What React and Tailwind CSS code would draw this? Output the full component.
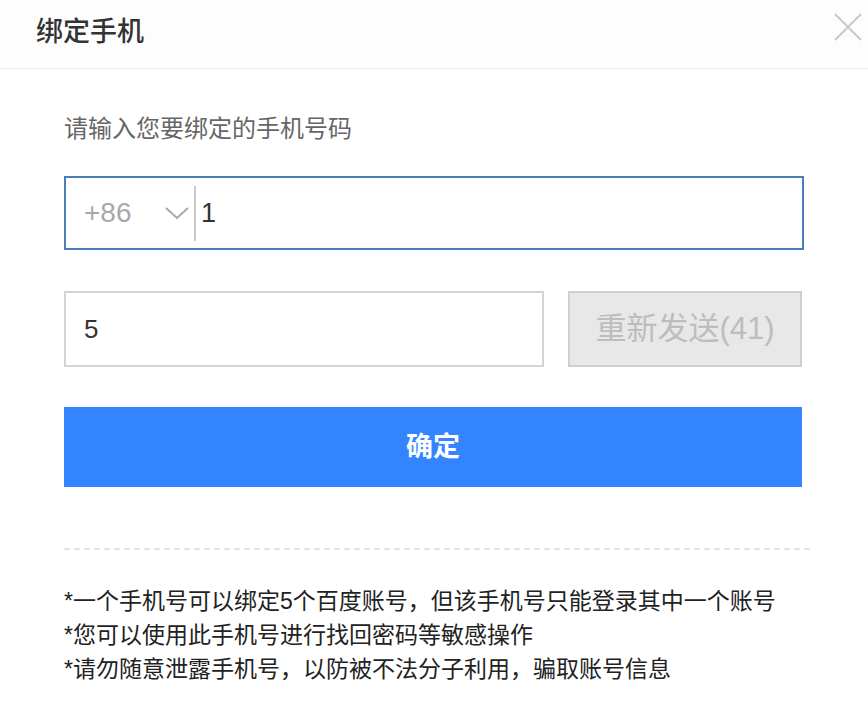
export default function App() {
  const font = { fontFamily: '"Liberation Sans", "Noto Sans CJK SC", sans-serif' };
  const notes = [
    "*一个手机号可以绑定5个百度账号，但该手机号只能登录其中一个账号",
    "*您可以使用此手机号进行找回密码等敏感操作",
    "*请勿随意泄露手机号，以防被不法分子利用，骗取账号信息",
  ];

  return (
    <div className="w-[868px] h-[720px] bg-white overflow-hidden" style={font}>
      {/* Header */}
      <div className="h-[69px] border-b border-[#ececec] bg-[#fdfdfd] flex items-center justify-between pl-[36px] pr-[6px]">
        <h2 className="text-[27px] text-[#333] font-medium leading-none -mt-[3px]">绑定手机</h2>
        <button className="w-[28px] h-[28px] -mt-[14px] text-[#c8c8c8]">
          <svg viewBox="0 0 28 28" width="28" height="28" fill="none" stroke="currentColor" strokeWidth="2">
            <path d="M1 1 L27 27 M27 1 L1 27" />
          </svg>
        </button>
      </div>

      <div className="px-[64px] pt-[43px]">
        <p className="text-[24px] leading-[34px] text-[#666]">请输入您要绑定的手机号码</p>

        {/* Phone input */}
        <div className="mt-[30px] h-[74px] border-2 border-[#4a7ebb] flex items-center">
          <span className="pl-[18px] text-[28px] text-[#a8a8a8] w-[96px]">+86</span>
          <svg className="ml-[2px]" width="26" height="16" viewBox="0 0 26 16" fill="none" stroke="#a8a8a8" strokeWidth="2">
            <path d="M2 3 L13 13 L24 3" />
          </svg>
          <div className="ml-[4px] w-[2px] h-[55px] bg-[#c8c8c8]" />
          <span className="ml-[5px] text-[27px] text-[#333]">1</span>
        </div>

        {/* Code row */}
        <div className="mt-[41px] flex gap-[24px]">
          <div className="w-[480px] h-[76px] border-2 border-[#d4d4d4] flex items-center pl-[18px]">
            <span className="text-[26px] text-[#333]">5</span>
          </div>
          <button className="w-[234px] h-[76px] border-2 border-[#cfcfcf] bg-[#e8e8e8] text-[31px] text-[#bdbdbd]">
            重新发送(41)
          </button>
        </div>

        {/* Confirm */}
        <button className="mt-[40px] w-[738px] h-[80px] bg-[#3385ff] text-white text-[27px] font-bold">
          确定
        </button>

        <div className="mt-[61px] w-[746px] border-t-2 border-dashed border-[#e2e2e2]" />

        <div className="mt-[34px] text-[23px] leading-[34px] text-[#222]">
          {notes.map((n) => (
            <p key={n}>{n}</p>
          ))}
        </div>
      </div>
    </div>
  );
}
